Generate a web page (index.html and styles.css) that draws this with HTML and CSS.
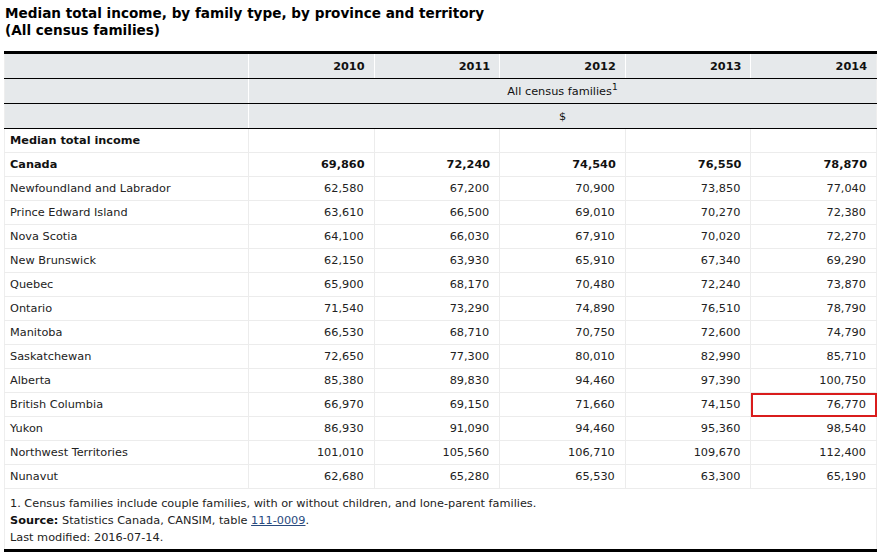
FILE: index.html
```html
<!DOCTYPE html>
<html>
<head>
<meta charset="utf-8">
<link rel="stylesheet" href="styles.css">
</head>
<body>
<h2 class="title">Median total income, by family type, by province and territory<br>(All census families)</h2>
<table class="data">
  <colgroup>
    <col class="c-label"><col><col><col><col><col>
  </colgroup>
  <thead>
    <tr class="hrow">
      <th></th><th class="num">2010</th><th class="num">2011</th><th class="num">2012</th><th class="num">2013</th><th class="num">2014</th>
    </tr>
    <tr class="hrow sub">
      <th></th><th colspan="5" class="center">All census families<sup>1</sup></th>
    </tr>
    <tr class="hrow sub last">
      <th></th><th colspan="5" class="center">$</th>
    </tr>
  </thead>
  <tbody>
    <tr><td class="b">Median total income</td><td></td><td></td><td></td><td></td><td></td></tr>
    <tr class="b"><td>Canada</td><td>69,860</td><td>72,240</td><td>74,540</td><td>76,550</td><td>78,870</td></tr>
    <tr><td>Newfoundland and Labrador</td><td>62,580</td><td>67,200</td><td>70,900</td><td>73,850</td><td>77,040</td></tr>
    <tr><td>Prince Edward Island</td><td>63,610</td><td>66,500</td><td>69,010</td><td>70,270</td><td>72,380</td></tr>
    <tr><td>Nova Scotia</td><td>64,100</td><td>66,030</td><td>67,910</td><td>70,020</td><td>72,270</td></tr>
    <tr><td>New Brunswick</td><td>62,150</td><td>63,930</td><td>65,910</td><td>67,340</td><td>69,290</td></tr>
    <tr><td>Quebec</td><td>65,900</td><td>68,170</td><td>70,480</td><td>72,240</td><td>73,870</td></tr>
    <tr><td>Ontario</td><td>71,540</td><td>73,290</td><td>74,890</td><td>76,510</td><td>78,790</td></tr>
    <tr><td>Manitoba</td><td>66,530</td><td>68,710</td><td>70,750</td><td>72,600</td><td>74,790</td></tr>
    <tr><td>Saskatchewan</td><td>72,650</td><td>77,300</td><td>80,010</td><td>82,990</td><td>85,710</td></tr>
    <tr><td>Alberta</td><td>85,380</td><td>89,830</td><td>94,460</td><td>97,390</td><td>100,750</td></tr>
    <tr><td>British Columbia</td><td>66,970</td><td>69,150</td><td>71,660</td><td>74,150</td><td class="hl">76,770</td></tr>
    <tr><td>Yukon</td><td>86,930</td><td>91,090</td><td>94,460</td><td>95,360</td><td>98,540</td></tr>
    <tr><td>Northwest Territories</td><td>101,010</td><td>105,560</td><td>106,710</td><td>109,670</td><td>112,400</td></tr>
    <tr><td>Nunavut</td><td>62,680</td><td>65,280</td><td>65,530</td><td>63,300</td><td>65,190</td></tr>
  </tbody>
  <tfoot>
    <tr>
      <td colspan="6" class="notes">
        <div>1. Census families include couple families, with or without children, and lone-parent families.</div>
        <div><strong>Source:</strong> Statistics Canada, CANSIM, table <a href="#">111-0009</a>.</div>
        <div>Last modified: 2016-07-14.</div>
      </td>
    </tr>
  </tfoot>
</table>
</body>
</html>
```
FILE: styles.css
```css
html, body {
  margin: 0;
  padding: 0;
  background: #ffffff;
}
body {
  font-family: "DejaVu Sans", Verdana, sans-serif;
  font-size: 11.3px;
  color: #222222;
  padding: 5px 7px 0 4px;
}
.title {
  margin: 0 0 12px 1px;
  font-size: 13.6px;
  line-height: 17px;
  font-weight: bold;
  color: #000000;
}
.data {
  width: 873px;
  border-collapse: collapse;
  table-layout: fixed;
  border-top: 3px solid #000000;
  border-bottom: 3px solid #000000;
  border-left: 1px solid #eeeeee;
  border-right: 1px solid #eeeeee;
}
.c-label {
  width: 244px;
}
.hrow th {
  background: #e6e9eb;
  height: 24px;
  padding: 0 9px;
  font-weight: bold;
  border-left: 1px solid #ffffff;
  border-bottom: 1px solid #000000;
  vertical-align: middle;
  color: #111111;
}
.hrow th:first-child {
  border-left: none;
}
.hrow.sub th {
  font-weight: normal;
  height: 24px;
}
.hrow th.num {
  text-align: right;
}
.hrow th.center {
  text-align: center;
  border-left: 1px solid #ffffff;
}
sup {
  font-size: 9px;
  line-height: 0;
  vertical-align: 5px;
}
tbody td {
  height: 23px;
  padding: 0 10px 0 5px;
  border-left: 1px solid #ececec;
  border-bottom: 1px solid #ececec;
  text-align: right;
  vertical-align: middle;
  white-space: nowrap;
}
tbody td:first-child {
  text-align: left;
  border-left: none;
}
tbody td.b, tbody tr.b td {
  font-weight: bold;
  color: #111111;
}
tbody tr.b td {
  padding-right: 9px;
}
tbody td.hl {
  outline: 2px solid #d91c1c;
  outline-offset: -2px;
}
.notes {
  padding: 6px 5px 3px 5px;
  line-height: 17px;
  text-align: left;
}
.notes a {
  color: #284a7e;
  text-decoration: underline;
}
.notes strong {
  color: #111111;
}
```
